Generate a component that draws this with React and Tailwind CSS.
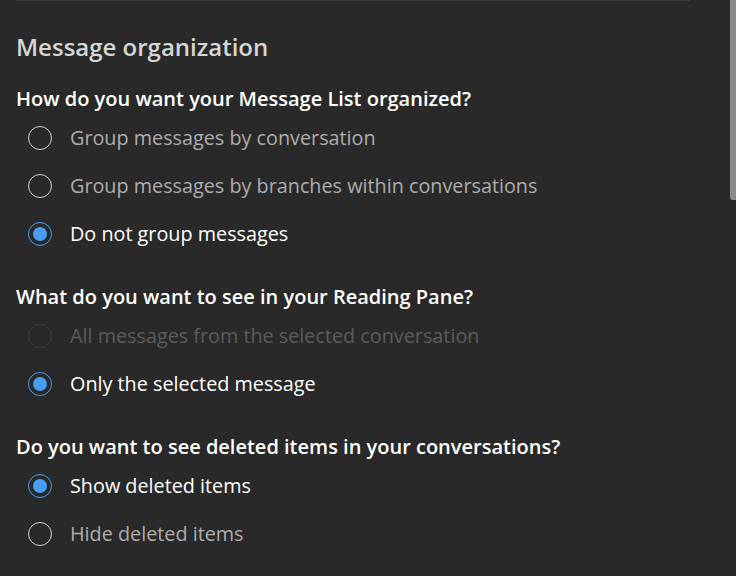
import React from "react";

function Radio({ state }) {
  if (state === "checked") {
    return (
      <span className="flex h-[24px] w-[24px] shrink-0 items-center justify-center rounded-full border-[1.5px] border-[#479ef5]">
        <span className="h-[14px] w-[14px] rounded-full bg-[#479ef5]" />
      </span>
    );
  }
  if (state === "disabled") {
    return <span className="h-[24px] w-[24px] shrink-0 rounded-full border-[1.5px] border-[#404040]" />;
  }
  return <span className="h-[24px] w-[24px] shrink-0 rounded-full border-[1.5px] border-[#d1d1d1]" />;
}

function Option({ label, state }) {
  const color =
    state === "checked" ? "text-white" : state === "disabled" ? "text-[#5c5c5c]" : "text-[#adadad]";
  return (
    <div className="flex h-[48px] items-center pl-[12px]">
      <Radio state={state} />
      <span className={`ml-[18px] text-[19.8px] leading-[28px] ${color}`}>{label}</span>
    </div>
  );
}

function Question({ children }) {
  return (
    <div className="flex h-[30px] items-center text-[20px] font-semibold leading-[28px] text-white">
      {children}
    </div>
  );
}

export default function App() {
  return (
    <div
      className="relative h-[576px] w-[736px] overflow-hidden bg-[#292929]"
      style={{ fontFamily: '"Open Sans", "Noto Sans", sans-serif' }}
    >
      <div className="absolute right-0 top-0 h-[200px] w-[6px] rounded-bl-[3px] bg-[#8a8a8a]" />
      <div className="ml-[16px] mr-[46px] border-t border-[#3b3b3b]" />
      <div className="px-[16px]">
        <div className="mt-[30px] flex h-[32px] items-center text-[24px] font-semibold text-[#d6d6d6]">
          Message organization
        </div>
        <div className="mt-[21px]">
          <Question>How do you want your Message List organized?</Question>
          <Option label="Group messages by conversation" state="unchecked" />
          <Option label="Group messages by branches within conversations" state="unchecked" />
          <Option label="Do not group messages" state="checked" />
        </div>
        <div className="mt-[24px]">
          <Question>What do you want to see in your Reading Pane?</Question>
          <Option label="All messages from the selected conversation" state="disabled" />
          <Option label="Only the selected message" state="checked" />
        </div>
        <div className="mt-[24px]">
          <Question>Do you want to see deleted items in your conversations?</Question>
          <Option label="Show deleted items" state="checked" />
          <Option label="Hide deleted items" state="unchecked" />
        </div>
      </div>
    </div>
  );
}
